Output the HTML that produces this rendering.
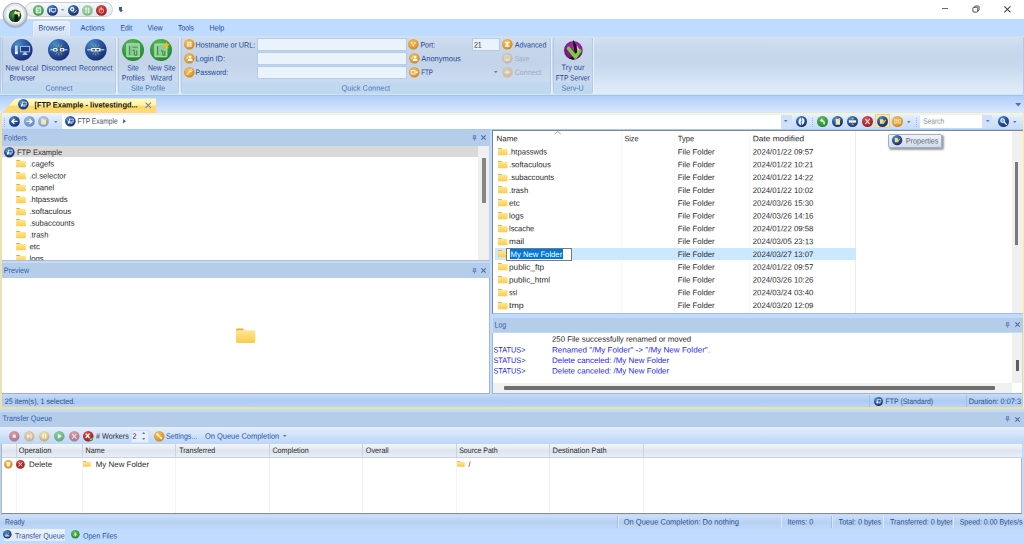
<!DOCTYPE html>
<html><head><meta charset="utf-8"><title>FTP Example</title>
<style>
*{box-sizing:border-box;margin:0;padding:0}
html,body{width:1024px;height:544px;overflow:hidden;background:#bfdbff}
body{font-family:"Liberation Sans",sans-serif;font-size:7.9px;color:#1e4a94;position:relative}
.a{position:absolute}
.t{position:absolute;left:0;top:0;white-space:pre;line-height:10px;transform-origin:0 0}
svg{position:absolute;overflow:visible}
</style></head><body>
<svg width="0" height="0" style="left:0;top:0"><defs>
<radialGradient id="gb" cx=".32" cy=".22" r=".95"><stop offset="0" stop-color="#4a8cc8"/><stop offset=".4" stop-color="#2a5aa4"/><stop offset=".8" stop-color="#1a347c"/><stop offset="1" stop-color="#13265f"/></radialGradient>
<radialGradient id="gg" cx=".42" cy=".3" r=".85"><stop offset="0" stop-color="#62bd62"/><stop offset=".5" stop-color="#35a040"/><stop offset=".85" stop-color="#24822f"/><stop offset="1" stop-color="#1a6a26"/></radialGradient>
<radialGradient id="go" cx=".42" cy=".35" r=".8"><stop offset="0" stop-color="#f4c270"/><stop offset=".5" stop-color="#e6a234"/><stop offset=".85" stop-color="#c8821e"/><stop offset="1" stop-color="#b06c14"/></radialGradient>
<radialGradient id="gr" cx=".42" cy=".3" r=".85"><stop offset="0" stop-color="#d85a58"/><stop offset=".5" stop-color="#b82a2c"/><stop offset="1" stop-color="#861618"/></radialGradient>
<radialGradient id="gy" cx=".45" cy=".3" r=".8"><stop offset="0" stop-color="#f6e6a8"/><stop offset=".5" stop-color="#e4c050"/><stop offset="1" stop-color="#b89028"/></radialGradient>
<radialGradient id="gp" cx=".55" cy=".3" r=".85"><stop offset="0" stop-color="#a42cb0"/><stop offset=".5" stop-color="#8a1c92"/><stop offset="1" stop-color="#561060"/></radialGradient>
<radialGradient id="gw" cx=".5" cy=".46" r=".54"><stop offset="0" stop-color="#ffffff"/><stop offset=".62" stop-color="#f3f5f8"/><stop offset=".8" stop-color="#d3dae2"/><stop offset=".93" stop-color="#aab4c2"/><stop offset="1" stop-color="#c9d0da"/></radialGradient>
<radialGradient id="gdg" cx=".4" cy=".4" r=".8"><stop offset="0" stop-color="#4a9a50"/><stop offset=".6" stop-color="#14501f"/><stop offset="1" stop-color="#08240e"/></radialGradient>
<linearGradient id="tg" x1="0" y1="0" x2="0" y2="1"><stop offset="0" stop-color="#fffcc6"/><stop offset=".44" stop-color="#fff4a2"/><stop offset=".5" stop-color="#ffd96c"/><stop offset="1" stop-color="#ffda7a"/></linearGradient>
<linearGradient id="fg" x1="0" y1="0" x2="0" y2="1"><stop offset="0" stop-color="#ffe694"/><stop offset="1" stop-color="#fbcc4c"/></linearGradient>
</defs></svg>
<div class="a" style="left:0px;top:0px;width:1024px;height:19px;background:#fff;"></div>
<div class="a" style="left:0px;top:19px;width:1024px;height:17px;background:#bfdbff;"></div>
<div class="a" style="left:25px;top:2px;width:87.5px;height:15px;border-radius:8px;background:linear-gradient(#f7f8fa,#e3e7ec);border:1px solid #c9cfd8"></div>
<svg style="left:33.30px;top:4.50px;opacity:0.85;" width="10.8" height="10.8" viewBox="0 0 24 24"><circle cx="12" cy="12" r="12" fill="url(#gg)"/><rect x="6.500" y="5.500" width="11" height="13" rx="1" fill="#cfeacc" stroke="#e8f6e8" stroke-width=".8"/><path d="M10 9.500h4v5.500h-4" stroke="#3c9444" stroke-width="1.500" fill="none"/></svg>
<svg style="left:47.30px;top:4.50px;" width="10.8" height="10.8" viewBox="0 0 24 24"><circle cx="12" cy="12" r="12" fill="url(#gb)"/><rect x="4.500" y="7.500" width="3" height="9" fill="#f0f4fa"/><rect x="9.500" y="7.500" width="10" height="6.500" fill="none" stroke="#f0f4fa" stroke-width="1.600"/><rect x="12" y="15.500" width="5" height="1.500" fill="#f0f4fa"/></svg>
<svg style="left:61.40px;top:8.70px" width="3.4" height="2" viewBox="0 0 8 5"><path d="M0 0h8L4 5z" fill="#7a92bc"/></svg>
<svg style="left:68.20px;top:4.50px;" width="10.8" height="10.8" viewBox="0 0 24 24"><circle cx="12" cy="12" r="12" fill="url(#gb)"/><circle cx="9.500" cy="9.500" r="3.600" fill="none" stroke="#fff" stroke-width="2.400"/><path d="M12 14l2.500 3.500 5-6" stroke="#f0c030" stroke-width="2.200" fill="none"/></svg>
<svg style="left:82.20px;top:4.50px;opacity:0.5;" width="10.8" height="10.8" viewBox="0 0 24 24"><circle cx="12" cy="12" r="12" fill="url(#gg)"/><path d="M9 18V8M15 6v10" stroke="#e6f4e6" stroke-width="2.600"/><path d="M6 9l3-4 3 4zM12 15l3 4 3-4z" fill="#e6f4e6"/></svg>
<svg style="left:96.10px;top:4.50px;" width="10.8" height="10.8" viewBox="0 0 24 24"><circle cx="12" cy="12" r="12" fill="url(#gr)"/><circle cx="12" cy="13" r="5" fill="none" stroke="#f4c8c8" stroke-width="1.700"/><path d="M12 5.500v6.500" stroke="#f4c8c8" stroke-width="2"/></svg>
<div class="a" style="left:119px;top:7px;width:3px;height:2.5px;background:#3a5a9a;"></div>
<svg style="left:118.50px;top:9.95px" width="4" height="2.5" viewBox="0 0 8 5"><path d="M0 0h8L4 5z" fill="#3a5a9a"/></svg>
<svg style="left:1.600px;top:2.200px" width="26" height="26" viewBox="0 0 26 26"><circle cx="13.300" cy="13.700" r="12.600" fill="#7c8898" opacity=".3"/><circle cx="13" cy="13" r="12" fill="url(#gw)" stroke="#9ca8b8" stroke-width=".7"/><circle cx="13" cy="13.800" r="6.300" fill="url(#gdg)"/><path d="M12.300 10.300l1.200-1.800 1 1.200h3.300v4.800h-2.300v-2.400h-3.200z" fill="#ece8a0"/><rect x="12.600" y="12.800" width="3.300" height="6.800" fill="#161616"/></svg>
<div class="a" style="left:942px;top:8.2px;width:6.4px;height:1px;background:#6a6a6a;"></div>
<svg style="left:972px;top:5px" width="8" height="8" viewBox="0 0 8 8"><rect x=".9" y="2.300" width="4.800" height="4.800" rx=".9" fill="none" stroke="#4c4c4c" stroke-width="1"/><path d="M2.500 2.300V1.900Q2.500 1 3.400 1H6.200Q7.100 1 7.100 1.900V4.700Q7.100 5.600 6.200 5.600H5.700" fill="none" stroke="#4c4c4c" stroke-width="1"/></svg>
<svg style="left:1004.200px;top:5.600px" width="6.800" height="6.800" viewBox="0 0 8 8"><path d="M.4.400l7.200 7.200M7.600.4L.4 7.600" stroke="#444" stroke-width="1.250" fill="none"/></svg>
<div class="a" style="left:31.6px;top:20px;width:39.4px;height:17px;background:linear-gradient(#e6effa,#dbe7f5 60%,#d4e1f1);border:1px solid #c3d7f0;border-bottom:none;border-radius:3px 3px 0 0;box-shadow:inset 0 0 0 .6px #f0f6fd"></div>
<div class="a" style="left:0px;top:36px;width:1024px;height:60px;background:linear-gradient(#d5e2f2 0%,#cddcef 12%,#c6d7ec 30%,#c8d8ed 50%,#d7e5f5 78%,#e1eefa 100%)"></div>
<div class="a" style="left:0px;top:36px;width:1023.5px;height:58.5px;border:1px solid #b4cbe8;border-top-color:#cfdff2;border-radius:3px"></div>
<div class="a" style="left:0px;top:93.6px;width:1024px;height:1.2px;background:#cbe7f4;"></div>
<div class="a" style="left:0px;top:94.8px;width:1024px;height:1.4px;background:#a6c2e6;"></div>
<div class="a" style="left:2px;top:36.5px;width:113.5px;height:57.5px;background:linear-gradient(#cedcef 0%,#c6d7ec 18%,#c3d4ea 45%,#cbdbef 78%);border:1px solid #b4c9e5;border-top-color:#d3e0f2;border-radius:3px;box-shadow:1px 0 0 rgba(236,244,252,.9)"></div>
<div class="a" style="left:3px;top:82px;width:111.5px;height:11.5px;background:#c1d8f1;border-radius:0 0 2px 2px"></div>
<div class="a" style="left:117.5px;top:36.5px;width:61.0px;height:57.5px;background:linear-gradient(#cedcef 0%,#c6d7ec 18%,#c3d4ea 45%,#cbdbef 78%);border:1px solid #b4c9e5;border-top-color:#d3e0f2;border-radius:3px;box-shadow:1px 0 0 rgba(236,244,252,.9)"></div>
<div class="a" style="left:118.5px;top:82px;width:59.0px;height:11.5px;background:#c1d8f1;border-radius:0 0 2px 2px"></div>
<div class="a" style="left:180.5px;top:36.5px;width:370.0px;height:57.5px;background:linear-gradient(#cedcef 0%,#c6d7ec 18%,#c3d4ea 45%,#cbdbef 78%);border:1px solid #b4c9e5;border-top-color:#d3e0f2;border-radius:3px;box-shadow:1px 0 0 rgba(236,244,252,.9)"></div>
<div class="a" style="left:181.5px;top:82px;width:368.0px;height:11.5px;background:#c1d8f1;border-radius:0 0 2px 2px"></div>
<div class="a" style="left:552.5px;top:36.5px;width:40.5px;height:57.5px;background:linear-gradient(#cedcef 0%,#c6d7ec 18%,#c3d4ea 45%,#cbdbef 78%);border:1px solid #b4c9e5;border-top-color:#d3e0f2;border-radius:3px;box-shadow:1px 0 0 rgba(236,244,252,.9)"></div>
<div class="a" style="left:553.5px;top:82px;width:38.5px;height:11.5px;background:#c1d8f1;border-radius:0 0 2px 2px"></div>
<svg style="left:10.80px;top:39.20px;" width="21.6" height="21.6" viewBox="0 0 24 24"><circle cx="12" cy="12" r="12" fill="url(#gb)"/><rect x="4.4" y="7.2" width="3" height="9.6" fill="#c4d4ea"/><rect x="4.4" y="14" width="3" height="2.800" fill="#fff"/><rect x="10.600" y="8.200" width="10" height="6" fill="#1c3c84" stroke="#a9c4e4" stroke-width="1.100"/><path d="M14.200 14.600h2.800l.6 2h-4z" fill="#c4d4ea"/><rect x="12.800" y="16.600" width="5.600" height=".9" fill="#e4ecf6"/></svg>
<svg style="left:47.80px;top:39.20px;" width="21.6" height="21.6" viewBox="0 0 24 24"><circle cx="12" cy="12" r="12" fill="url(#gb)"/><path d="M8.500 6.500l2 3M12 5.500v3.500M15.500 6.500l-2 3M8.500 17.500l2-3M12 18.500v-3.500M15.500 17.500l-2-3" stroke="#c8a45c" stroke-width=".8"/><path d="M2.500 12h3.500M18 12h3.500" stroke="#f2f6fb" stroke-width="1"/><rect x="5.600" y="10" width="5" height="4" rx="1.400" fill="#f4f7fb"/><rect x="13.200" y="10" width="5" height="4" rx="1.400" fill="#f4f7fb"/><rect x="7" y="11.200" width="2.200" height="1.600" fill="#26468c"/><rect x="14.600" y="11.200" width="2.200" height="1.600" fill="#26468c"/></svg>
<svg style="left:84.80px;top:39.20px;" width="21.6" height="21.6" viewBox="0 0 24 24"><circle cx="12" cy="12" r="12" fill="url(#gb)"/><path d="M8.500 6.500l2 3M12 5.500v3.500M15.500 6.500l-2 3M8.500 17.500l2-3M12 18.500v-3.500M15.500 17.500l-2-3" stroke="#c8a45c" stroke-width=".8"/><path d="M2.500 12h4M17.500 12h4" stroke="#f2f6fb" stroke-width="1"/><rect x="6.500" y="10" width="11" height="4" rx="1.600" fill="#f4f7fb"/><rect x="8.200" y="11.200" width="3" height="1.600" fill="#26468c"/><rect x="12.800" y="11.200" width="3" height="1.600" fill="#26468c"/></svg>
<svg style="left:121.80px;top:39.00px;" width="22" height="22" viewBox="0 0 24 24"><circle cx="12" cy="12" r="12" fill="url(#gg)"/><rect x="4.600" y="4.600" width="15" height="15.400" rx="1.200" fill="#96cf9a" opacity=".9"/><rect x="5.400" y="5.400" width="13.400" height="13.800" rx=".8" fill="none" stroke="#c4e6c4" stroke-width=".7"/><path d="M8.300 8v9.500M11.500 9h5.500M11.500 12.500h2v5M16 12.500v5h-2.500" stroke="#3f9848" stroke-width="1.300" fill="none"/></svg>
<svg style="left:150.20px;top:39.00px;" width="22" height="22" viewBox="0 0 24 24"><circle cx="12" cy="12" r="12" fill="url(#gg)"/><rect x="4.600" y="5" width="14.400" height="15" rx="1.200" fill="#96cf9a" opacity=".9"/><rect x="5.400" y="5.800" width="12.800" height="13.400" rx=".8" fill="none" stroke="#c4e6c4" stroke-width=".7"/><path d="M8.300 8v9.500M12 13h2v4.500M16.200 13v4.500h-2.500" stroke="#3f9848" stroke-width="1.300" fill="none"/><path d="M17.800 2.800l1.100 2.500 2.700.3-2 1.900.6 2.700-2.400-1.400-2.400 1.400.6-2.700-2-1.900 2.700-.3z" fill="#f6b820"/></svg>
<svg style="left:183.60px;top:39.30px;" width="10.6" height="10.6" viewBox="0 0 24 24"><circle cx="12" cy="12" r="12" fill="url(#go)"/><path d="M6 8h12M6 12h12M6 16h12M9 6v12M15 6v12" stroke="#fff" stroke-width="1.4"/></svg>
<svg style="left:183.60px;top:53.00px;" width="10.6" height="10.6" viewBox="0 0 24 24"><circle cx="12" cy="12" r="12" fill="url(#go)"/><circle cx="14" cy="9" r="3" fill="#fff"/><path d="M8.5 18c0-4 2.5-5.5 5.5-5.5s5.5 1.5 5.5 5.5z" fill="#fff"/><path d="M5 14l5-6" stroke="#fff" stroke-width="1.6"/></svg>
<svg style="left:183.60px;top:66.80px;" width="10.6" height="10.6" viewBox="0 0 24 24"><circle cx="12" cy="12" r="12" fill="url(#go)"/><path d="M6 18l8-9" stroke="#fff" stroke-width="2"/><circle cx="15.5" cy="8" r="2.6" fill="none" stroke="#fff" stroke-width="1.6"/><path d="M8 15.5l2 2" stroke="#fff" stroke-width="1.4"/></svg>
<div class="a" style="left:257.25px;top:37.6px;width:149.25px;height:13.5px;background:#eaf2fb;border:1px solid #b4cce8"></div>
<div class="a" style="left:257.25px;top:51.6px;width:149.25px;height:13.5px;background:#eaf2fb;border:1px solid #b4cce8"></div>
<div class="a" style="left:257.25px;top:65.6px;width:149.25px;height:13.5px;background:#eaf2fb;border:1px solid #b4cce8"></div>
<svg style="left:408.00px;top:39.30px;" width="10.6" height="10.6" viewBox="0 0 24 24"><circle cx="12" cy="12" r="12" fill="url(#go)"/><circle cx="8" cy="9" r="1.6" fill="#fff"/><circle cx="16" cy="9" r="1.6" fill="#fff"/><circle cx="12" cy="15" r="1.6" fill="#fff"/><path d="M8 9l4 6 4-6" stroke="#fff" stroke-width=".8" fill="none"/></svg>
<svg style="left:408.70px;top:53.00px;" width="10.6" height="10.6" viewBox="0 0 24 24"><circle cx="12" cy="12" r="12" fill="url(#go)"/><circle cx="14" cy="9" r="3" fill="#fff"/><path d="M8.5 18c0-4 2.5-5.5 5.5-5.5s5.5 1.5 5.5 5.5z" fill="#fff"/><path d="M5 14l5-6" stroke="#fff" stroke-width="1.6"/></svg>
<svg style="left:408.70px;top:66.80px;" width="10.6" height="10.6" viewBox="0 0 24 24"><circle cx="12" cy="12" r="12" fill="url(#go)"/><rect x="5" y="8" width="8.5" height="8" fill="none" stroke="#fff" stroke-width="1.8"/><circle cx="17.5" cy="12" r="2.3" fill="#fff"/></svg>
<div class="a" style="left:472.25px;top:37.6px;width:28px;height:13.5px;background:#eaf2fb;border:1px solid #b4cce8"></div>
<svg style="left:494.45px;top:71.10px" width="3.6" height="2.2" viewBox="0 0 8 5"><path d="M0 0h8L4 5z" fill="#5a7cb4"/></svg>
<svg style="left:501.95px;top:39.30px;" width="10.6" height="10.6" viewBox="0 0 24 24"><circle cx="12" cy="12" r="12" fill="url(#go)"/><path d="M7 6.5h10v3h-3v5h3v3H7v-3h3v-5H7z" fill="#fff"/></svg>
<svg style="left:501.95px;top:53.00px;opacity:0.4;" width="10.6" height="10.6" viewBox="0 0 24 24"><circle cx="12" cy="12" r="12" fill="url(#go)"/><rect x="6.5" y="6.5" width="11" height="11" fill="none" stroke="#fff" stroke-width="1.5"/><rect x="9" y="12.5" width="6" height="5" fill="#fff"/></svg>
<svg style="left:501.95px;top:66.80px;opacity:0.4;" width="10.6" height="10.6" viewBox="0 0 24 24"><circle cx="12" cy="12" r="12" fill="url(#go)"/><path d="M4 12h16" stroke="#fff" stroke-width="1.4"/><rect x="8" y="9.5" width="8" height="5" rx="1.5" fill="#fff"/></svg>
<svg style="left:563.500px;top:41.100px" width="18.700" height="18.700" viewBox="0 0 24 24"><circle cx="12" cy="12" r="12" fill="url(#gp)"/><path d="M6.500 22.300Q10.500 24.500 14.500 23.200L13 19.500z" fill="#151008"/><path d="M11.600 -2L15.600 5L17.200 17.500L13.600 13.500L12 4z" fill="#17130d"/><path d="M16.800 5.500L19.800 11.500L17.600 17.500z" fill="#efeee4"/><path d="M5.800 9.400L14.700 20.700L20.300 12.500" stroke="#78d032" stroke-width="4.500" stroke-linecap="round" stroke-linejoin="round" fill="none"/><path d="M12.200 4L15.800 9.500L16.800 16L14 12.500z" fill="#17130d"/></svg>
<div class="a" style="left:0px;top:96px;width:1024px;height:17px;background:linear-gradient(#b1cffa,#c3dafb 45%,#dde9fc)"></div>
<svg style="left:0;top:97.500px" width="160" height="16" viewBox="0 0 160 16"><path d="M1.500 15.500L14 2Q15.500 .6 17.500 .6H156V15.500Z" fill="url(#tg)"/></svg>
<svg style="left:17.50px;top:99.30px;" width="10.6" height="10.6" viewBox="0 0 24 24"><circle cx="12" cy="12" r="12" fill="url(#gb)"/><path d="M4 9l6 3-2 5" stroke="#9cc4f0" stroke-width="1.4" fill="none"/><rect x="10" y="7" width="8.5" height="6.5" fill="none" stroke="#fff" stroke-width="1.6"/><rect x="12" y="15" width="5" height="2" fill="#fff"/><rect x="6.5" y="12" width="4" height="5" fill="#fff"/></svg>
<svg style="left:145.200px;top:102px" width="6.500" height="6.500" viewBox="0 0 7 7"><path d="M.6.6l5.800 5.800M6.400.6L.6 6.400" stroke="#6883b4" stroke-width="1.150" fill="none"/></svg>
<svg style="left:1014.80px;top:103.00px" width="6.4" height="3.6" viewBox="0 0 8 5"><path d="M0 0h8L4 5z" fill="#4870b4"/></svg>
<div class="a" style="left:0px;top:112.5px;width:1024px;height:395.5px;height:296.400px;border:1px solid #f3e3a0;border-bottom:1.700px solid #f1e294;border-left:2px solid #ebe1b4;border-right:1px solid #f8ee9c;border-top-color:#e6eac4"></div>
<div class="a" style="left:2px;top:113.3px;width:1020.5px;height:15.4px;background:linear-gradient(#eef4fd,#d9e7fb 40%,#c5dbf9)"></div>
<div class="a" style="left:2px;top:128.6px;width:1020.5px;height:1px;background:#a9c9f5;"></div>
<div class="a" style="left:157px;top:112.3px;width:866px;height:1.1px;background:#e6e9c6;"></div>
<div class="a" style="left:4px;top:117.5px;width:1px;height:1px;background:#9db7dd;"></div>
<div class="a" style="left:4px;top:119.5px;width:1px;height:1px;background:#9db7dd;"></div>
<div class="a" style="left:4px;top:121.5px;width:1px;height:1px;background:#9db7dd;"></div>
<div class="a" style="left:4px;top:123.5px;width:1px;height:1px;background:#9db7dd;"></div>
<div class="a" style="left:4px;top:125.5px;width:1px;height:1px;background:#9db7dd;"></div>
<svg style="left:9.00px;top:116.10px;" width="10.8" height="10.8" viewBox="0 0 24 24"><circle cx="12" cy="12" r="12" fill="url(#gb)"/><path d="M19 12H7M12 6.5L6.5 12l5.500 5.500" stroke="#fff" stroke-width="3" fill="none"/></svg>
<svg style="left:24.00px;top:116.10px;opacity:0.5;" width="10.8" height="10.8" viewBox="0 0 24 24"><circle cx="12" cy="12" r="12" fill="url(#gb)"/><path d="M5 12h12M12 6.5l5.500 5.500L12 17.500" stroke="#fff" stroke-width="3" fill="none"/></svg>
<svg style="left:38.35px;top:116.10px;opacity:0.9;" width="10.8" height="10.8" viewBox="0 0 24 24"><circle cx="12" cy="12" r="12" fill="url(#gb)" opacity="0.42"/><path d="M7 6h8l3 3v10H7z" fill="#f6e8a8"/><path d="M15 6v3h3" fill="#e0c060"/><circle cx="17" cy="7" r="2" fill="#f8d040"/></svg>
<svg style="left:54.45px;top:120.70px" width="3.6" height="2.2" viewBox="0 0 8 5"><path d="M0 0h8L4 5z" fill="#5a7cb4"/></svg>
<div class="a" style="left:62px;top:114.8px;width:719px;height:13.8px;background:#fff;"></div>
<svg style="left:65.30px;top:116.20px;" width="10.6" height="10.6" viewBox="0 0 24 24"><circle cx="12" cy="12" r="12" fill="url(#gb)"/><path d="M4 9l6 3-2 5" stroke="#9cc4f0" stroke-width="1.4" fill="none"/><rect x="10" y="7" width="8.5" height="6.5" fill="none" stroke="#fff" stroke-width="1.6"/><rect x="12" y="15" width="5" height="2" fill="#fff"/><rect x="6.5" y="12" width="4" height="5" fill="#fff"/></svg>
<svg style="left:122.500px;top:119.300px" width="3" height="4.600" viewBox="0 0 3 5"><path d="M0 0l3 2.500L0 5z" fill="#3a5a9a"/></svg>
<div class="a" style="left:781px;top:114.8px;width:10.6px;height:13.8px;background:#cfe0f8;"></div>
<svg style="left:784.45px;top:120.40px" width="3.6" height="2.2" viewBox="0 0 8 5"><path d="M0 0h8L4 5z" fill="#5a7cb4"/></svg>
<svg style="left:795.90px;top:116.10px;" width="11" height="11" viewBox="0 0 24 24"><circle cx="12" cy="12" r="12" fill="url(#gb)"/><path d="M10 20.500C3.500 17 4 7.500 11 4l1 6.500c-2 1.500-2.500 4.500-1 6.500zM14 3.500c6.500 3.500 6 13-1 16.500l-1-6.500c2-1.500 2.500-4.500 1-6.500z" fill="#f4f8fd"/></svg>
<div class="a" style="left:812px;top:117.5px;width:1px;height:1px;background:#9db7dd;"></div>
<div class="a" style="left:812px;top:119.5px;width:1px;height:1px;background:#9db7dd;"></div>
<div class="a" style="left:812px;top:121.5px;width:1px;height:1px;background:#9db7dd;"></div>
<div class="a" style="left:812px;top:123.5px;width:1px;height:1px;background:#9db7dd;"></div>
<div class="a" style="left:812px;top:125.5px;width:1px;height:1px;background:#9db7dd;"></div>
<svg style="left:816.75px;top:116.10px;" width="11" height="11" viewBox="0 0 24 24"><circle cx="12" cy="12" r="12" fill="url(#gg)"/><path d="M15 18.500c2-5-.5-8.500-5-8.500" stroke="#f2f8f2" stroke-width="3" fill="none"/><path d="M11.500 5.500L6.500 10l5.500 3.500z" fill="#f2f8f2"/></svg>
<svg style="left:831.75px;top:116.10px;" width="11" height="11" viewBox="0 0 24 24"><circle cx="12" cy="12" r="12" fill="url(#gb)"/><path d="M8 6h7l2.500 2.500V19H8z" fill="#f6e8a8"/><circle cx="16.5" cy="6.500" r="2.200" fill="#f8c830"/></svg>
<svg style="left:846.75px;top:116.10px;" width="11" height="11" viewBox="0 0 24 24"><circle cx="12" cy="12" r="12" fill="url(#gb)"/><rect x="4" y="9.500" width="16" height="5" fill="#fff"/><path d="M12.500 5v14M10 5h5M10 19h5" stroke="#e8c040" stroke-width="1.600"/></svg>
<svg style="left:861.75px;top:116.10px;" width="11" height="11" viewBox="0 0 24 24"><circle cx="12" cy="12" r="12" fill="url(#gr)"/><path d="M7 6.500l10 11M17 6.500l-10 11" stroke="#f8e4e4" stroke-width="2.300"/></svg>
<div class="a" style="left:874.75px;top:114.3px;width:14.75px;height:14.2px;background:#ffe8a8;border:1px solid #f2cc80"></div>
<svg style="left:876.60px;top:116.10px;" width="11" height="11" viewBox="0 0 24 24"><circle cx="12" cy="12" r="12" fill="url(#gb)"/><path d="M6.500 7h6l2 2v8h-8z" fill="#f2dc88"/><path d="M11 13l2.500 3 5.500-7.500" stroke="#f8cc38" stroke-width="2.200" fill="none"/></svg>
<svg style="left:892.40px;top:116.10px;" width="11" height="11" viewBox="0 0 24 24"><circle cx="12" cy="12" r="12" fill="url(#go)"/><rect x="5" y="8" width="4" height="8" fill="none" stroke="#f6e6cc" stroke-width="1.300"/><rect x="15" y="8" width="4" height="8" fill="none" stroke="#f6e6cc" stroke-width="1.300"/><path d="M9 10.500h6M9 13.500h6" stroke="#f6e6cc" stroke-width="1.300"/></svg>
<svg style="left:907.30px;top:120.70px" width="3.6" height="2.2" viewBox="0 0 8 5"><path d="M0 0h8L4 5z" fill="#5a7cb4"/></svg>
<div class="a" style="left:916px;top:117.5px;width:1px;height:1px;background:#9db7dd;"></div>
<div class="a" style="left:916px;top:119.5px;width:1px;height:1px;background:#9db7dd;"></div>
<div class="a" style="left:916px;top:121.5px;width:1px;height:1px;background:#9db7dd;"></div>
<div class="a" style="left:916px;top:123.5px;width:1px;height:1px;background:#9db7dd;"></div>
<div class="a" style="left:916px;top:125.5px;width:1px;height:1px;background:#9db7dd;"></div>
<div class="a" style="left:919.75px;top:114.8px;width:62.5px;height:13.6px;background:#fff;"></div>
<div class="a" style="left:982.25px;top:114.8px;width:10px;height:13.6px;background:#cfe0f8;"></div>
<svg style="left:985.60px;top:120.40px" width="3.6" height="2.2" viewBox="0 0 8 5"><path d="M0 0h8L4 5z" fill="#5a7cb4"/></svg>
<svg style="left:998.00px;top:116.10px;" width="11" height="11" viewBox="0 0 24 24"><circle cx="12" cy="12" r="12" fill="url(#gb)"/><circle cx="10" cy="10" r="4.200" fill="#7ab0e8" stroke="#fff" stroke-width="2"/><path d="M13.500 13.500l5.500 5.500" stroke="#fff" stroke-width="2.600"/></svg>
<svg style="left:1012.70px;top:120.70px" width="3.6" height="2.2" viewBox="0 0 8 5"><path d="M0 0h8L4 5z" fill="#5a7cb4"/></svg>
<div class="a" style="left:2px;top:130px;width:487.5px;height:15.5px;background:#b6cde9;"></div>
<svg style="left:471.50px;top:134.90px" width="5" height="6" viewBox="0 0 5 6"><rect x="1.200" y=".5" width="2.600" height="3" fill="#7d9fd4" stroke="#5f86c6" stroke-width=".6"/><path d="M.5 3.700h4M2.500 3.700V5.800" stroke="#5f86c6" stroke-width=".8"/></svg>
<svg style="left:481.25px;top:135.40px" width="5" height="5" viewBox="0 0 5 5"><path d="M.3.3l4.400 4.400M4.700.3L.3 4.700" stroke="#4a70b6" stroke-width="1.150" fill="none"/></svg>
<div class="a" style="left:2px;top:145.5px;width:487.5px;height:115.3px;background:#fff;border-bottom:1px solid #b9bdc4;border-right:1px solid #c4d2e4"></div>
<div class="a" style="left:2px;top:146px;width:476px;height:11.3px;background:#d9d9d9;"></div>
<div class="a" style="left:478px;top:145.5px;width:11px;height:114.5px;background:#f0f0f0;"></div>
<div class="a" style="left:482px;top:158px;width:3.5px;height:45px;background:#868686;"></div>
<svg style="left:3.70px;top:146.70px;" width="10.6" height="10.6" viewBox="0 0 24 24"><circle cx="12" cy="12" r="12" fill="url(#gb)"/><path d="M4 9l6 3-2 5" stroke="#9cc4f0" stroke-width="1.4" fill="none"/><rect x="10" y="7" width="8.5" height="6.5" fill="none" stroke="#fff" stroke-width="1.6"/><rect x="12" y="15" width="5" height="2" fill="#fff"/><rect x="6.5" y="12" width="4" height="5" fill="#fff"/></svg>
<svg style="left:16.25px;top:160.30px" width="10" height="7.3" viewBox="0 0 20 15"><path d="M0 1.500Q0 0 1.500 0H7l2 2.500H0z" fill="#e6ad30"/><rect x="0" y="2" width="20" height="13" rx="1.200" fill="url(#fg)"/></svg>
<svg style="left:16.25px;top:172.12px" width="10" height="7.3" viewBox="0 0 20 15"><path d="M0 1.500Q0 0 1.500 0H7l2 2.500H0z" fill="#e6ad30"/><rect x="0" y="2" width="20" height="13" rx="1.200" fill="url(#fg)"/></svg>
<svg style="left:16.25px;top:183.94px" width="10" height="7.3" viewBox="0 0 20 15"><path d="M0 1.500Q0 0 1.500 0H7l2 2.500H0z" fill="#e6ad30"/><rect x="0" y="2" width="20" height="13" rx="1.200" fill="url(#fg)"/></svg>
<svg style="left:16.25px;top:195.76px" width="10" height="7.3" viewBox="0 0 20 15"><path d="M0 1.500Q0 0 1.500 0H7l2 2.500H0z" fill="#e6ad30"/><rect x="0" y="2" width="20" height="13" rx="1.200" fill="url(#fg)"/></svg>
<svg style="left:16.25px;top:207.58px" width="10" height="7.3" viewBox="0 0 20 15"><path d="M0 1.500Q0 0 1.500 0H7l2 2.500H0z" fill="#e6ad30"/><rect x="0" y="2" width="20" height="13" rx="1.200" fill="url(#fg)"/></svg>
<svg style="left:16.25px;top:219.40px" width="10" height="7.3" viewBox="0 0 20 15"><path d="M0 1.500Q0 0 1.500 0H7l2 2.500H0z" fill="#e6ad30"/><rect x="0" y="2" width="20" height="13" rx="1.200" fill="url(#fg)"/></svg>
<svg style="left:16.25px;top:231.22px" width="10" height="7.3" viewBox="0 0 20 15"><path d="M0 1.500Q0 0 1.500 0H7l2 2.500H0z" fill="#e6ad30"/><rect x="0" y="2" width="20" height="13" rx="1.200" fill="url(#fg)"/></svg>
<svg style="left:16.25px;top:243.04px" width="10" height="7.3" viewBox="0 0 20 15"><path d="M0 1.500Q0 0 1.500 0H7l2 2.500H0z" fill="#e6ad30"/><rect x="0" y="2" width="20" height="13" rx="1.200" fill="url(#fg)"/></svg>
<div class="a" style="left:2px;top:254px;width:476px;height:6.200px;overflow:hidden"><svg style="left:14.250px;top:.860px" width="10" height="7.300" viewBox="0 0 20 15"><path d="M0 1.500Q0 0 1.500 0H7l2 2.500H0z" fill="#e6ad30"/><rect x="0" y="2" width="20" height="13" rx="1.200" fill="url(#fg)"/></svg></div>
<div class="a" style="left:2px;top:263px;width:487.5px;height:15.2px;background:#b6cde9;"></div>
<svg style="left:471.50px;top:267.60px" width="5" height="6" viewBox="0 0 5 6"><rect x="1.200" y=".5" width="2.600" height="3" fill="#7d9fd4" stroke="#5f86c6" stroke-width=".6"/><path d="M.5 3.700h4M2.500 3.700V5.800" stroke="#5f86c6" stroke-width=".8"/></svg>
<svg style="left:481.25px;top:268.10px" width="5" height="5" viewBox="0 0 5 5"><path d="M.3.3l4.400 4.400M4.700.3L.3 4.700" stroke="#4a70b6" stroke-width="1.150" fill="none"/></svg>
<div class="a" style="left:2px;top:278.2px;width:487.8px;height:115.6px;background:#fff;border-bottom:1px solid #a4afbf;border-right:1px solid #a3b6d0"></div>
<svg style="left:235.70px;top:327.90px" width="19.3" height="15.3" viewBox="0 0 20 15"><path d="M0 1.500Q0 0 1.500 0H7l2 2.500H0z" fill="#e6ad30"/><rect x="0" y="2" width="20" height="13" rx="1.200" fill="url(#fg)"/></svg>
<div class="a" style="left:492px;top:130.3px;width:530.5px;height:183.5px;background:#fff;border:1px solid #7b8494;border-top-color:#80868f;border-right:none;border-bottom-color:#a9bcd8"></div>
<div class="a" style="left:620.75px;top:131.3px;width:0.8px;height:181.5px;background:#f5f7fa;"></div>
<div class="a" style="left:674px;top:131.3px;width:0.8px;height:181.5px;background:#f5f7fa;"></div>
<div class="a" style="left:749px;top:131.3px;width:0.8px;height:181.5px;background:#f5f7fa;"></div>
<div class="a" style="left:855.3px;top:131.3px;width:0.8px;height:181.5px;background:#ebedf0;"></div>
<div class="a" style="left:495.25px;top:248.2px;width:360.4px;height:11.8px;background:#cce8ff;"></div>
<div class="a" style="left:1011.5px;top:131.3px;width:11px;height:181.5px;background:#f0f0f0;"></div>
<div class="a" style="left:1015.3px;top:161.6px;width:2.8px;height:83px;background:#7a7a7a;"></div>
<svg style="left:553.800px;top:131.300px" width="7.500" height="3.500" viewBox="0 0 8 4"><path d="M.5 3.500L4 .5l3.500 3" stroke="#8a8a8a" stroke-width=".9" fill="none"/></svg>
<svg style="left:497.60px;top:147.90px" width="9.5" height="7.3" viewBox="0 0 20 15"><path d="M0 1.500Q0 0 1.500 0H7l2 2.500H0z" fill="#e6ad30"/><rect x="0" y="2" width="20" height="13" rx="1.200" fill="url(#fg)"/></svg>
<svg style="left:497.60px;top:160.70px" width="9.5" height="7.3" viewBox="0 0 20 15"><path d="M0 1.500Q0 0 1.500 0H7l2 2.500H0z" fill="#e6ad30"/><rect x="0" y="2" width="20" height="13" rx="1.200" fill="url(#fg)"/></svg>
<svg style="left:497.60px;top:173.50px" width="9.5" height="7.3" viewBox="0 0 20 15"><path d="M0 1.500Q0 0 1.500 0H7l2 2.500H0z" fill="#e6ad30"/><rect x="0" y="2" width="20" height="13" rx="1.200" fill="url(#fg)"/></svg>
<svg style="left:497.60px;top:186.30px" width="9.5" height="7.3" viewBox="0 0 20 15"><path d="M0 1.500Q0 0 1.500 0H7l2 2.500H0z" fill="#e6ad30"/><rect x="0" y="2" width="20" height="13" rx="1.200" fill="url(#fg)"/></svg>
<svg style="left:497.60px;top:199.10px" width="9.5" height="7.3" viewBox="0 0 20 15"><path d="M0 1.500Q0 0 1.500 0H7l2 2.500H0z" fill="#e6ad30"/><rect x="0" y="2" width="20" height="13" rx="1.200" fill="url(#fg)"/></svg>
<svg style="left:497.60px;top:211.90px" width="9.5" height="7.3" viewBox="0 0 20 15"><path d="M0 1.500Q0 0 1.500 0H7l2 2.500H0z" fill="#e6ad30"/><rect x="0" y="2" width="20" height="13" rx="1.200" fill="url(#fg)"/></svg>
<svg style="left:497.60px;top:224.70px" width="9.5" height="7.3" viewBox="0 0 20 15"><path d="M0 1.500Q0 0 1.500 0H7l2 2.500H0z" fill="#e6ad30"/><rect x="0" y="2" width="20" height="13" rx="1.200" fill="url(#fg)"/></svg>
<svg style="left:497.60px;top:237.50px" width="9.5" height="7.3" viewBox="0 0 20 15"><path d="M0 1.500Q0 0 1.500 0H7l2 2.500H0z" fill="#e6ad30"/><rect x="0" y="2" width="20" height="13" rx="1.200" fill="url(#fg)"/></svg>
<svg style="left:497.60px;top:250.30px" width="9.5" height="7.3" viewBox="0 0 20 15"><path d="M0 1.500Q0 0 1.500 0H7l2 2.500H0z" fill="#e6ad30"/><rect x="0" y="2" width="20" height="13" rx="1.200" fill="url(#fg)"/></svg>
<div class="a" style="left:506.25px;top:247.5px;width:65.25px;height:13px;background:#fff;border:1px solid #7a7a7a"></div>
<div class="a" style="left:509.5px;top:249px;width:53.5px;height:10.4px;background:#0078d7;"></div>
<svg style="left:497.60px;top:263.10px" width="9.5" height="7.3" viewBox="0 0 20 15"><path d="M0 1.500Q0 0 1.500 0H7l2 2.500H0z" fill="#e6ad30"/><rect x="0" y="2" width="20" height="13" rx="1.200" fill="url(#fg)"/></svg>
<svg style="left:497.60px;top:275.90px" width="9.5" height="7.3" viewBox="0 0 20 15"><path d="M0 1.500Q0 0 1.500 0H7l2 2.500H0z" fill="#e6ad30"/><rect x="0" y="2" width="20" height="13" rx="1.200" fill="url(#fg)"/></svg>
<svg style="left:497.60px;top:288.70px" width="9.5" height="7.3" viewBox="0 0 20 15"><path d="M0 1.500Q0 0 1.500 0H7l2 2.500H0z" fill="#e6ad30"/><rect x="0" y="2" width="20" height="13" rx="1.200" fill="url(#fg)"/></svg>
<svg style="left:497.60px;top:301.50px" width="9.5" height="7.3" viewBox="0 0 20 15"><path d="M0 1.500Q0 0 1.500 0H7l2 2.500H0z" fill="#e6ad30"/><rect x="0" y="2" width="20" height="13" rx="1.200" fill="url(#fg)"/></svg>
<div class="a" style="left:888.2px;top:133.5px;width:53.7px;height:14.4px;background:linear-gradient(#f0f4fa,#dfe8f4 50%,#d0ddef);border:1px solid #a4aebc;border-radius:2px;box-shadow:1.300px 1.500px 2px rgba(0,0,0,.38)"></div>
<svg style="left:891.95px;top:135.45px;" width="10.3" height="10.3" viewBox="0 0 24 24"><circle cx="12" cy="12" r="12" fill="url(#gb)"/><path d="M6.500 7h6l2 2v8h-8z" fill="#f2dc88"/><path d="M11 13l2.500 3 5.500-7.500" stroke="#f8cc38" stroke-width="2.200" fill="none"/></svg>
<div class="a" style="left:492.5px;top:318.2px;width:530px;height:14.3px;background:#b6cde9;"></div>
<svg style="left:1004.50px;top:321.80px" width="5" height="6" viewBox="0 0 5 6"><rect x="1.200" y=".5" width="2.600" height="3" fill="#7d9fd4" stroke="#5f86c6" stroke-width=".6"/><path d="M.5 3.700h4M2.500 3.700V5.800" stroke="#5f86c6" stroke-width=".8"/></svg>
<svg style="left:1014.70px;top:322.30px" width="5" height="5" viewBox="0 0 5 5"><path d="M.3.3l4.400 4.400M4.700.3L.3 4.700" stroke="#4a70b6" stroke-width="1.150" fill="none"/></svg>
<div class="a" style="left:492.2px;top:332.5px;width:530.3px;height:61px;background:#fff;border-left:1px solid #9fb6d6;border-bottom:1px solid #9fb6d6"></div>
<div class="a" style="left:1011.8px;top:332.5px;width:10.7px;height:50.5px;background:#f0f0f0;"></div>
<div class="a" style="left:1015.7px;top:360px;width:3.2px;height:10.7px;background:#5e5e5e;"></div>
<div class="a" style="left:493.2px;top:383px;width:518.6px;height:10px;background:#f0f0f0;"></div>
<div class="a" style="left:504px;top:386.3px;width:491px;height:3.4px;background:#6e6e6e;border-radius:1px"></div>
<div class="a" style="left:2px;top:393.8px;width:1020.5px;height:13.2px;background:linear-gradient(#c6dbf7,#aecbf3 55%,#b9d4f7)"></div>
<div class="a" style="left:869px;top:394.5px;width:0.8px;height:12px;background:#a4c0e6;"></div>
<div class="a" style="left:966px;top:394.5px;width:0.8px;height:12px;background:#a4c0e6;"></div>
<svg style="left:874.10px;top:396.60px;" width="9" height="9" viewBox="0 0 24 24"><circle cx="12" cy="12" r="12" fill="url(#gb)"/><path d="M4 9l6 3-2 5" stroke="#9cc4f0" stroke-width="1.4" fill="none"/><rect x="10" y="7" width="8.5" height="6.5" fill="none" stroke="#fff" stroke-width="1.6"/><rect x="12" y="15" width="5" height="2" fill="#fff"/><rect x="6.5" y="12" width="4" height="5" fill="#fff"/></svg>
<div class="a" style="left:0px;top:408.6px;width:1024px;height:3.4px;background:#c3dbfa;"></div>
<div class="a" style="left:0px;top:407px;width:1023px;height:1.5px;background:#efe296;"></div>
<div class="a" style="left:0px;top:411.8px;width:1024px;height:15px;background:#b6cde9;"></div>
<svg style="left:1004.50px;top:416.00px" width="5" height="6" viewBox="0 0 5 6"><rect x="1.200" y=".5" width="2.600" height="3" fill="#7d9fd4" stroke="#5f86c6" stroke-width=".6"/><path d="M.5 3.700h4M2.500 3.700V5.800" stroke="#5f86c6" stroke-width=".8"/></svg>
<svg style="left:1014.70px;top:416.50px" width="5" height="5" viewBox="0 0 5 5"><path d="M.3.3l4.400 4.400M4.700.3L.3 4.700" stroke="#4a70b6" stroke-width="1.150" fill="none"/></svg>
<div class="a" style="left:0px;top:426.8px;width:1024px;height:17px;background:linear-gradient(#e6effc,#d2e3fb 45%,#bdd6f8)"></div>
<svg style="left:8.75px;top:430.65px;opacity:0.5;" width="10.5" height="10.5" viewBox="0 0 24 24"><circle cx="12" cy="12" r="12" fill="url(#gr)"/><rect x="8.500" y="8.500" width="7" height="7" fill="#fff"/></svg>
<svg style="left:23.50px;top:430.65px;opacity:0.5;" width="10.5" height="10.5" viewBox="0 0 24 24"><circle cx="12" cy="12" r="12" fill="url(#go)"/><path d="M7 7l7 5-7 5z" fill="#fff"/><rect x="15" y="7" width="2.500" height="10" fill="#fff"/></svg>
<svg style="left:38.50px;top:430.65px;opacity:0.7;" width="10.5" height="10.5" viewBox="0 0 24 24"><circle cx="12" cy="12" r="12" fill="url(#gy)"/><rect x="7.500" y="7" width="3" height="10" fill="#fff"/><rect x="13.500" y="7" width="3" height="10" fill="#fff"/></svg>
<svg style="left:53.50px;top:430.65px;opacity:0.6;" width="10.5" height="10.5" viewBox="0 0 24 24"><circle cx="12" cy="12" r="12" fill="url(#gg)"/><path d="M9 6.500l9 5.500-9 5.500z" fill="#fff"/></svg>
<svg style="left:68.50px;top:430.65px;opacity:0.5;" width="10.5" height="10.5" viewBox="0 0 24 24"><circle cx="12" cy="12" r="12" fill="url(#gr)"/><path d="M7 6.500l10 11M17 6.500l-10 11" stroke="#f8e4e4" stroke-width="2.300"/></svg>
<svg style="left:83.25px;top:430.65px;" width="10.5" height="10.5" viewBox="0 0 24 24"><circle cx="12" cy="12" r="12" fill="url(#gr)"/><path d="M6 6l9 10M15 6l-9 10" stroke="#fff" stroke-width="2.800"/><circle cx="18.500" cy="18.500" r="4.500" fill="#3a9a3a"/><path d="M16.500 18.500l1.500 1.800 2.800-3.600" stroke="#fff" stroke-width="1.300" fill="none"/></svg>
<div class="a" style="left:131.1px;top:430px;width:18px;height:12.5px;background:#e6effa;border:1px solid #d2e0f4"></div>
<svg style="left:142px;top:432px" width="3.400" height="2" viewBox="0 0 8 5"><path d="M0 5h8L4 0z" fill="#5a7cb4"/></svg>
<svg style="left:142.00px;top:438.00px" width="3.4" height="2" viewBox="0 0 8 5"><path d="M0 0h8L4 5z" fill="#5a7cb4"/></svg>
<svg style="left:154.00px;top:430.75px;" width="10.5" height="10.5" viewBox="0 0 24 24"><circle cx="12" cy="12" r="12" fill="url(#go)"/><path d="M7.500 7.500l9 9" stroke="#fff" stroke-width="2.600"/><circle cx="7.500" cy="7.500" r="2.400" fill="#fff"/><circle cx="16.500" cy="16.500" r="2.400" fill="#fff"/></svg>
<svg style="left:283.20px;top:434.90px" width="3.6" height="2.2" viewBox="0 0 8 5"><path d="M0 0h8L4 5z" fill="#5a7cb4"/></svg>
<div class="a" style="left:1.7px;top:443.5px;width:1020.5px;height:14.5px;background:linear-gradient(#f2f5fa,#e3e9f2 45%,#dde4ee 50%,#e9eef6);border-bottom:1px solid #c9d3e2"></div>
<div class="a" style="left:1.7px;top:458px;width:1020.5px;height:56.4px;background:#fff;border-bottom:1px solid #8c8c8c;border-right:1px solid #b0b8c4"></div>
<div class="a" style="left:0px;top:443.5px;width:1.7px;height:71px;background:#bad4f6;"></div>
<div class="a" style="left:1.2px;top:443.5px;width:0.7px;height:71px;background:#aeb8c6;"></div>
<div class="a" style="left:15.6px;top:444.2px;width:0.8px;height:13px;background:#c9d3e2;"></div>
<div class="a" style="left:15.6px;top:458px;width:0.8px;height:55.4px;background:#f0f4fa;"></div>
<div class="a" style="left:82.25px;top:444.2px;width:0.8px;height:13px;background:#c9d3e2;"></div>
<div class="a" style="left:82.25px;top:458px;width:0.8px;height:55.4px;background:#f0f4fa;"></div>
<div class="a" style="left:175.25px;top:444.2px;width:0.8px;height:13px;background:#c9d3e2;"></div>
<div class="a" style="left:175.25px;top:458px;width:0.8px;height:55.4px;background:#f0f4fa;"></div>
<div class="a" style="left:268.7px;top:444.2px;width:0.8px;height:13px;background:#c9d3e2;"></div>
<div class="a" style="left:268.7px;top:458px;width:0.8px;height:55.4px;background:#f0f4fa;"></div>
<div class="a" style="left:362.1px;top:444.2px;width:0.8px;height:13px;background:#c9d3e2;"></div>
<div class="a" style="left:362.1px;top:458px;width:0.8px;height:55.4px;background:#f0f4fa;"></div>
<div class="a" style="left:455.5px;top:444.2px;width:0.8px;height:13px;background:#c9d3e2;"></div>
<div class="a" style="left:455.5px;top:458px;width:0.8px;height:55.4px;background:#f0f4fa;"></div>
<div class="a" style="left:549px;top:444.2px;width:0.8px;height:13px;background:#c9d3e2;"></div>
<div class="a" style="left:549px;top:458px;width:0.8px;height:55.4px;background:#f0f4fa;"></div>
<div class="a" style="left:642.5px;top:444.2px;width:0.8px;height:13px;background:#c9d3e2;"></div>
<div class="a" style="left:642.5px;top:458px;width:0.8px;height:55.4px;background:#f0f4fa;"></div>
<svg style="left:4.20px;top:459.70px;" width="8.6" height="8.6" viewBox="0 0 24 24"><circle cx="12" cy="12" r="12" fill="url(#go)"/><path d="M7 8h10l-1.500 10h-7z" fill="#fff" opacity=".85"/><rect x="6" y="6" width="12" height="2" fill="#fff"/></svg>
<svg style="left:16.00px;top:459.60px;" width="8.8" height="8.8" viewBox="0 0 24 24"><circle cx="12" cy="12" r="12" fill="url(#gr)"/><path d="M7 6.500l10 11M17 6.500l-10 11" stroke="#f8e4e4" stroke-width="2.300"/></svg>
<svg style="left:83.20px;top:461.00px" width="7.8" height="5.9" viewBox="0 0 20 15"><path d="M0 1.500Q0 0 1.500 0H7l2 2.500H0z" fill="#e6ad30"/><rect x="0" y="2" width="20" height="13" rx="1.200" fill="url(#fg)"/></svg>
<svg style="left:456.80px;top:461.00px" width="7.8" height="5.9" viewBox="0 0 20 15"><path d="M0 1.500Q0 0 1.500 0H7l2 2.500H0z" fill="#e6ad30"/><rect x="0" y="2" width="20" height="13" rx="1.200" fill="url(#fg)"/></svg>
<div class="a" style="left:0px;top:514.5px;width:1024px;height:14px;background:linear-gradient(#cde0f8,#b5d0f2 55%,#c1d9f7)"></div>
<div class="a" style="left:617px;top:515.5px;width:0.8px;height:12px;background:#a4c0e6;"></div>
<div class="a" style="left:617.8px;top:515.5px;width:0.8px;height:12px;background:#dbe9fb;"></div>
<div class="a" style="left:780.5px;top:515.5px;width:0.8px;height:12px;background:#a4c0e6;"></div>
<div class="a" style="left:781.3px;top:515.5px;width:0.8px;height:12px;background:#dbe9fb;"></div>
<div class="a" style="left:831.3px;top:515.5px;width:0.8px;height:12px;background:#a4c0e6;"></div>
<div class="a" style="left:832.0999999999999px;top:515.5px;width:0.8px;height:12px;background:#dbe9fb;"></div>
<div class="a" style="left:882.6px;top:515.5px;width:0.8px;height:12px;background:#a4c0e6;"></div>
<div class="a" style="left:883.4px;top:515.5px;width:0.8px;height:12px;background:#dbe9fb;"></div>
<div class="a" style="left:952.5px;top:515.5px;width:0.8px;height:12px;background:#a4c0e6;"></div>
<div class="a" style="left:953.3px;top:515.5px;width:0.8px;height:12px;background:#dbe9fb;"></div>
<div class="a" style="left:0px;top:528.5px;width:1024px;height:15.5px;background:#bfdbff;"></div>
<div class="a" style="left:2.75px;top:528.5px;width:63.5px;height:13.4px;background:linear-gradient(#e9f1fc,#e1ecfa);border:1px solid #c6d8f0;border-top:none;border-radius:0 0 2px 2px"></div>
<svg style="left:3.20px;top:530.45px;" width="8.6" height="8.6" viewBox="0 0 24 24"><circle cx="12" cy="12" r="12" fill="url(#gb)"/><path d="M5 16l4-5 3 3 5-7" stroke="#f0d040" stroke-width="2" fill="none"/><rect x="6" y="15" width="12" height="3" fill="#fff"/></svg>
<svg style="left:70.70px;top:530.45px;" width="8.6" height="8.6" viewBox="0 0 24 24"><circle cx="12" cy="12" r="12" fill="url(#gg)"/><path d="M7 16l5-9 5 9" stroke="#f0e070" stroke-width="2" fill="none"/><rect x="10.500" y="9" width="3" height="9" fill="#e8f4c0"/></svg>
<div class="t" style="color:#1e4a94;transform:translate(38.60px,23.60px) scaleX(0.9049) rotate(.03deg);">Browser</div>
<div class="t" style="color:#1e4a94;transform:translate(80.60px,23.60px) scaleX(0.9308) rotate(.03deg);">Actions</div>
<div class="t" style="color:#1e4a94;transform:translate(120.60px,23.60px) scaleX(0.8524) rotate(.03deg);">Edit</div>
<div class="t" style="color:#1e4a94;transform:translate(147.50px,23.60px) scaleX(0.8958) rotate(.03deg);">View</div>
<div class="t" style="color:#1e4a94;transform:translate(178.00px,23.60px) scaleX(0.8685) rotate(.03deg);">Tools</div>
<div class="t" style="color:#1e4a94;transform:translate(209.50px,23.60px) scaleX(0.9055) rotate(.03deg);">Help</div>
<div class="t" style="color:#4f78b4;transform:translate(45.60px,83.70px) scaleX(0.9119) rotate(.03deg);">Connect</div>
<div class="t" style="color:#4f78b4;transform:translate(130.90px,83.70px) scaleX(0.9016) rotate(.03deg);">Site Profile</div>
<div class="t" style="color:#4f78b4;transform:translate(341.50px,83.70px) scaleX(0.9408) rotate(.03deg);">Quick Connect</div>
<div class="t" style="color:#4f78b4;transform:translate(561.60px,83.70px) scaleX(0.8997) rotate(.03deg);">Serv-U</div>
<div class="t" style="color:#1e4a94;transform:translate(5.60px,63.60px) scaleX(0.8875) rotate(.03deg);">New Local</div>
<div class="t" style="color:#1e4a94;transform:translate(9.40px,73.60px) scaleX(0.8911) rotate(.03deg);">Browser</div>
<div class="t" style="color:#1e4a94;transform:translate(41.50px,63.60px) scaleX(0.8951) rotate(.03deg);">Disconnect</div>
<div class="t" style="color:#1e4a94;transform:translate(79.00px,63.60px) scaleX(0.8865) rotate(.03deg);">Reconnect</div>
<div class="t" style="color:#1e4a94;transform:translate(127.20px,63.60px) scaleX(0.8597) rotate(.03deg);">Site</div>
<div class="t" style="color:#1e4a94;transform:translate(121.80px,73.60px) scaleX(0.8741) rotate(.03deg);">Profiles</div>
<div class="t" style="color:#1e4a94;transform:translate(148.00px,63.60px) scaleX(0.8740) rotate(.03deg);">New Site</div>
<div class="t" style="color:#1e4a94;transform:translate(150.40px,73.60px) scaleX(0.8875) rotate(.03deg);">Wizard</div>
<div class="t" style="color:#1e4a94;transform:translate(195.60px,40.60px) scaleX(0.9121) rotate(.03deg);">Hostname or URL:</div>
<div class="t" style="color:#1e4a94;transform:translate(195.60px,54.30px) scaleX(0.9290) rotate(.03deg);">Login ID:</div>
<div class="t" style="color:#1e4a94;transform:translate(195.60px,68.10px) scaleX(0.8848) rotate(.03deg);">Password:</div>
<div class="t" style="color:#1e4a94;transform:translate(420.40px,40.60px) scaleX(0.8877) rotate(.03deg);">Port:</div>
<div class="t" style="color:#1e4a94;transform:translate(421.25px,54.30px) scaleX(0.9491) rotate(.03deg);">Anonymous</div>
<div class="t" style="color:#1e4a94;transform:translate(421.25px,68.10px) scaleX(0.7849) rotate(.03deg);">FTP</div>
<div class="t" style="color:#2b2b2b;transform:translate(473.90px,40.60px) scaleX(0.8883) rotate(.03deg);">21</div>
<div class="t" style="color:#1e4a94;transform:translate(514.75px,40.60px) scaleX(0.9029) rotate(.03deg);">Advanced</div>
<div class="t" style="color:#9fabbd;transform:translate(514.75px,54.30px) scaleX(0.8083) rotate(.03deg);">Save</div>
<div class="t" style="color:#9fabbd;transform:translate(514.75px,68.10px) scaleX(0.8999) rotate(.03deg);">Connect</div>
<div class="t" style="color:#1e4a94;transform:translate(561.60px,63.10px) scaleX(0.9189) rotate(.03deg);">Try our</div>
<div class="t" style="color:#1e4a94;transform:translate(555.75px,73.50px) scaleX(0.8445) rotate(.03deg);">FTP Server</div>
<div class="t" style="color:#141414;font-weight:bold;transform:translate(34.40px,100.50px) scaleX(0.9435) rotate(.03deg);">[FTP Example - livetestingd...</div>
<div class="t" style="color:#3c4c66;transform:translate(77.50px,116.75px) scaleX(0.8435) rotate(.03deg);">FTP Example</div>
<div class="t" style="color:#8a8f98;transform:translate(923.25px,116.75px) scaleX(0.8415) rotate(.03deg);">Search</div>
<div class="t" style="color:#2f62b0;transform:translate(3.75px,133.40px) scaleX(0.8874) rotate(.03deg);">Folders</div>
<div class="t" style="color:#2b2b2b;transform:translate(16.90px,148.00px) scaleX(0.9485) rotate(.03deg);">FTP Example</div>
<div class="t" style="color:#2b2b2b;transform:translate(29.40px,159.60px) scaleX(0.9743) rotate(.03deg);">.cagefs</div>
<div class="t" style="color:#2b2b2b;transform:translate(29.40px,171.42px) scaleX(0.9730) rotate(.03deg);">.cl.selector</div>
<div class="t" style="color:#2b2b2b;transform:translate(29.40px,183.24px) scaleX(0.9743) rotate(.03deg);">.cpanel</div>
<div class="t" style="color:#2b2b2b;transform:translate(29.40px,195.06px) scaleX(0.9649) rotate(.03deg);">.htpasswds</div>
<div class="t" style="color:#2b2b2b;transform:translate(29.40px,206.88px) scaleX(0.9927) rotate(.03deg);">.softaculous</div>
<div class="t" style="color:#2b2b2b;transform:translate(29.40px,218.70px) scaleX(0.9699) rotate(.03deg);">.subaccounts</div>
<div class="t" style="color:#2b2b2b;transform:translate(29.40px,230.52px) scaleX(0.9628) rotate(.03deg);">.trash</div>
<div class="t" style="color:#2b2b2b;transform:translate(29.40px,242.34px) scaleX(1.0065) rotate(.03deg);">etc</div>
<div class="t" style="color:#2b2b2b;transform:translate(29.40px,254.16px) scaleX(0.9942) rotate(.03deg);clip-path:inset(0 0 3.900px 0);">logs</div>
<div class="t" style="color:#2f62b0;transform:translate(3.75px,266.10px) scaleX(0.9064) rotate(.03deg);">Preview</div>
<div class="t" style="color:#2b2b2b;transform:translate(496.50px,134.25px) scaleX(1.0065) rotate(.03deg);">Name</div>
<div class="t" style="color:#2b2b2b;transform:translate(624.50px,134.25px) scaleX(0.9082) rotate(.03deg);">Size</div>
<div class="t" style="color:#2b2b2b;transform:translate(677.75px,134.25px) scaleX(0.9615) rotate(.03deg);">Type</div>
<div class="t" style="color:#2b2b2b;transform:translate(752.75px,134.25px) scaleX(1.0567) rotate(.03deg);">Date modified</div>
<div class="t" style="color:#2b2b2b;transform:translate(509.00px,147.50px) scaleX(0.9649) rotate(.03deg);">.htpasswds</div>
<div class="t" style="color:#2b2b2b;transform:translate(677.75px,147.50px) scaleX(0.9911) rotate(.03deg);">File Folder</div>
<div class="t" style="color:#2b2b2b;transform:translate(752.75px,147.50px) scaleX(0.9880) rotate(.03deg);">2024/01/22 09:57</div>
<div class="t" style="color:#2b2b2b;transform:translate(509.00px,160.30px) scaleX(0.9927) rotate(.03deg);">.softaculous</div>
<div class="t" style="color:#2b2b2b;transform:translate(677.75px,160.30px) scaleX(0.9911) rotate(.03deg);">File Folder</div>
<div class="t" style="color:#2b2b2b;transform:translate(752.75px,160.30px) scaleX(0.9880) rotate(.03deg);">2024/01/22 10:21</div>
<div class="t" style="color:#2b2b2b;transform:translate(509.00px,173.10px) scaleX(0.9720) rotate(.03deg);">.subaccounts</div>
<div class="t" style="color:#2b2b2b;transform:translate(677.75px,173.10px) scaleX(0.9911) rotate(.03deg);">File Folder</div>
<div class="t" style="color:#2b2b2b;transform:translate(752.75px,173.10px) scaleX(0.9880) rotate(.03deg);">2024/01/22 14:22</div>
<div class="t" style="color:#2b2b2b;transform:translate(509.00px,185.90px) scaleX(0.9729) rotate(.03deg);">.trash</div>
<div class="t" style="color:#2b2b2b;transform:translate(677.75px,185.90px) scaleX(0.9911) rotate(.03deg);">File Folder</div>
<div class="t" style="color:#2b2b2b;transform:translate(752.75px,185.90px) scaleX(0.9880) rotate(.03deg);">2024/01/22 10:02</div>
<div class="t" style="color:#2b2b2b;transform:translate(509.00px,198.70px) scaleX(1.0160) rotate(.03deg);">etc</div>
<div class="t" style="color:#2b2b2b;transform:translate(677.75px,198.70px) scaleX(0.9911) rotate(.03deg);">File Folder</div>
<div class="t" style="color:#2b2b2b;transform:translate(752.75px,198.70px) scaleX(0.9880) rotate(.03deg);">2024/03/26 15:30</div>
<div class="t" style="color:#2b2b2b;transform:translate(509.00px,211.50px) scaleX(1.0149) rotate(.03deg);">logs</div>
<div class="t" style="color:#2b2b2b;transform:translate(677.75px,211.50px) scaleX(0.9911) rotate(.03deg);">File Folder</div>
<div class="t" style="color:#2b2b2b;transform:translate(752.75px,211.50px) scaleX(0.9880) rotate(.03deg);">2024/03/26 14:16</div>
<div class="t" style="color:#2b2b2b;transform:translate(509.00px,224.30px) scaleX(0.9415) rotate(.03deg);">lscache</div>
<div class="t" style="color:#2b2b2b;transform:translate(677.75px,224.30px) scaleX(0.9911) rotate(.03deg);">File Folder</div>
<div class="t" style="color:#2b2b2b;transform:translate(752.75px,224.30px) scaleX(0.9880) rotate(.03deg);">2024/01/22 09:58</div>
<div class="t" style="color:#2b2b2b;transform:translate(509.00px,237.10px) scaleX(1.0505) rotate(.03deg);">mail</div>
<div class="t" style="color:#2b2b2b;transform:translate(677.75px,237.10px) scaleX(0.9911) rotate(.03deg);">File Folder</div>
<div class="t" style="color:#2b2b2b;transform:translate(752.75px,237.10px) scaleX(0.9880) rotate(.03deg);">2024/03/05 23:13</div>
<div class="t" style="color:#fff;transform:translate(510.60px,249.90px) scaleX(0.9724) rotate(.03deg);">My New Folder</div>
<div class="t" style="color:#2b2b2b;transform:translate(677.75px,249.90px) scaleX(0.9911) rotate(.03deg);">File Folder</div>
<div class="t" style="color:#2b2b2b;transform:translate(752.75px,249.90px) scaleX(0.9880) rotate(.03deg);">2024/03/27 13:07</div>
<div class="t" style="color:#2b2b2b;transform:translate(509.00px,262.70px) scaleX(1.0420) rotate(.03deg);">public_ftp</div>
<div class="t" style="color:#2b2b2b;transform:translate(677.75px,262.70px) scaleX(0.9911) rotate(.03deg);">File Folder</div>
<div class="t" style="color:#2b2b2b;transform:translate(752.75px,262.70px) scaleX(0.9880) rotate(.03deg);">2024/01/22 09:57</div>
<div class="t" style="color:#2b2b2b;transform:translate(509.00px,275.50px) scaleX(1.0295) rotate(.03deg);">public_html</div>
<div class="t" style="color:#2b2b2b;transform:translate(677.75px,275.50px) scaleX(0.9911) rotate(.03deg);">File Folder</div>
<div class="t" style="color:#2b2b2b;transform:translate(752.75px,275.50px) scaleX(0.9880) rotate(.03deg);">2024/03/26 10:26</div>
<div class="t" style="color:#2b2b2b;transform:translate(509.00px,288.30px) scaleX(0.8492) rotate(.03deg);">ssl</div>
<div class="t" style="color:#2b2b2b;transform:translate(677.75px,288.30px) scaleX(0.9911) rotate(.03deg);">File Folder</div>
<div class="t" style="color:#2b2b2b;transform:translate(752.75px,288.30px) scaleX(0.9880) rotate(.03deg);">2024/03/24 03:40</div>
<div class="t" style="color:#2b2b2b;transform:translate(509.00px,301.10px) scaleX(1.1173) rotate(.03deg);">tmp</div>
<div class="t" style="color:#2b2b2b;transform:translate(677.75px,301.10px) scaleX(0.9911) rotate(.03deg);">File Folder</div>
<div class="t" style="color:#2b2b2b;transform:translate(752.75px,301.10px) scaleX(0.9880) rotate(.03deg);">2024/03/20 12:09</div>
<div class="t" style="color:#626b78;transform:translate(905.80px,136.60px) scaleX(0.9063) rotate(.03deg);">Properties</div>
<div class="t" style="color:#2f62b0;transform:translate(494.50px,320.50px) scaleX(0.8883) rotate(.03deg);">Log</div>
<div class="t" style="color:#2b2b2b;transform:translate(552.00px,334.75px) scaleX(0.9857) rotate(.03deg);">250 File successfully renamed or moved</div>
<div class="t" style="color:#2a2ae8;transform:translate(493.50px,345.50px) scaleX(0.9244) rotate(.03deg);">STATUS&gt;</div>
<div class="t" style="color:#2a2ae8;transform:translate(552.00px,345.50px) scaleX(1.0261) rotate(.03deg);">Renamed &quot;/My Folder&quot; -&gt; &quot;/My New Folder&quot;.</div>
<div class="t" style="color:#2a2ae8;transform:translate(493.50px,356.00px) scaleX(0.9244) rotate(.03deg);">STATUS&gt;</div>
<div class="t" style="color:#2a2ae8;transform:translate(552.00px,356.00px) scaleX(1.0084) rotate(.03deg);">Delete canceled: /My New Folder</div>
<div class="t" style="color:#2a2ae8;transform:translate(493.50px,366.50px) scaleX(0.9244) rotate(.03deg);">STATUS&gt;</div>
<div class="t" style="color:#2a2ae8;transform:translate(552.00px,366.50px) scaleX(1.0084) rotate(.03deg);">Delete canceled: /My New Folder</div>
<div class="t" style="color:#2c4f8c;transform:translate(4.75px,397.00px) scaleX(0.9076) rotate(.03deg);">25 item(s), 1 selected.</div>
<div class="t" style="color:#2c4f8c;transform:translate(885.60px,397.00px) scaleX(0.8758) rotate(.03deg);">FTP (Standard)</div>
<div class="t" style="color:#2c4f8c;transform:translate(968.80px,397.00px) scaleX(0.9295) rotate(.03deg);">Duration: 0:07:3</div>
<div class="t" style="color:#2f62b0;transform:translate(2.50px,414.10px) scaleX(0.9023) rotate(.03deg);">Transfer Queue</div>
<div class="t" style="color:#2b2b2b;transform:translate(96.10px,431.75px) scaleX(0.9131) rotate(.03deg);"># Workers</div>
<div class="t" style="color:#2b2b2b;transform:translate(132.50px,431.75px) scaleX(0.9100) rotate(.03deg);">2</div>
<div class="t" style="color:#2457a6;transform:translate(166.10px,431.75px) scaleX(0.8862) rotate(.03deg);">Settings...</div>
<div class="t" style="color:#2457a6;transform:translate(204.90px,431.75px) scaleX(0.9463) rotate(.03deg);">On Queue Completion</div>
<div class="t" style="color:#2b2b2b;transform:translate(18.75px,446.00px) scaleX(0.9436) rotate(.03deg);">Operation</div>
<div class="t" style="color:#2b2b2b;transform:translate(85.60px,446.00px) scaleX(0.9021) rotate(.03deg);">Name</div>
<div class="t" style="color:#2b2b2b;transform:translate(179.25px,446.00px) scaleX(0.8877) rotate(.03deg);">Transferred</div>
<div class="t" style="color:#2b2b2b;transform:translate(272.40px,446.00px) scaleX(0.9093) rotate(.03deg);">Completion</div>
<div class="t" style="color:#2b2b2b;transform:translate(365.80px,446.00px) scaleX(0.9160) rotate(.03deg);">Overall</div>
<div class="t" style="color:#2b2b2b;transform:translate(459.20px,446.00px) scaleX(0.8863) rotate(.03deg);">Source Path</div>
<div class="t" style="color:#2b2b2b;transform:translate(552.60px,446.00px) scaleX(0.9343) rotate(.03deg);">Destination Path</div>
<div class="t" style="color:#2b2b2b;transform:translate(29.00px,459.90px) scaleX(1.0126) rotate(.03deg);">Delete</div>
<div class="t" style="color:#2b2b2b;transform:translate(95.70px,459.90px) scaleX(1.0064) rotate(.03deg);">My New Folder</div>
<div class="t" style="color:#2b2b2b;transform:translate(468.50px,459.90px) scaleX(0.9100) rotate(.03deg);">/</div>
<div class="t" style="color:#2c4f8c;transform:translate(5.00px,517.40px) scaleX(0.8592) rotate(.03deg);">Ready</div>
<div class="t" style="color:#2c4f8c;transform:translate(623.75px,517.40px) scaleX(0.9515) rotate(.03deg);">On Queue Completion: Do nothing</div>
<div class="t" style="color:#2c4f8c;transform:translate(787.50px,517.40px) scaleX(0.9153) rotate(.03deg);">Items: 0</div>
<div class="t" style="color:#2c4f8c;transform:translate(838.60px,517.40px) scaleX(0.9161) rotate(.03deg);">Total: 0 bytes</div>
<div class="t" style="color:#2c4f8c;transform:translate(890.00px,517.40px) scaleX(0.9072) rotate(.03deg);clip-path:inset(0 1.76px 0 0);">Transferred: 0 bytes</div>
<div class="t" style="color:#2c4f8c;transform:translate(959.70px,517.40px) scaleX(0.8878) rotate(.03deg);">Speed: 0.00 Bytes/s</div>
<div class="t" style="color:#2f5496;transform:translate(15.00px,531.50px) scaleX(0.9023) rotate(.03deg);">Transfer Queue</div>
<div class="t" style="color:#2f5496;transform:translate(82.90px,531.50px) scaleX(0.8963) rotate(.03deg);">Open Files</div>
</body></html>
